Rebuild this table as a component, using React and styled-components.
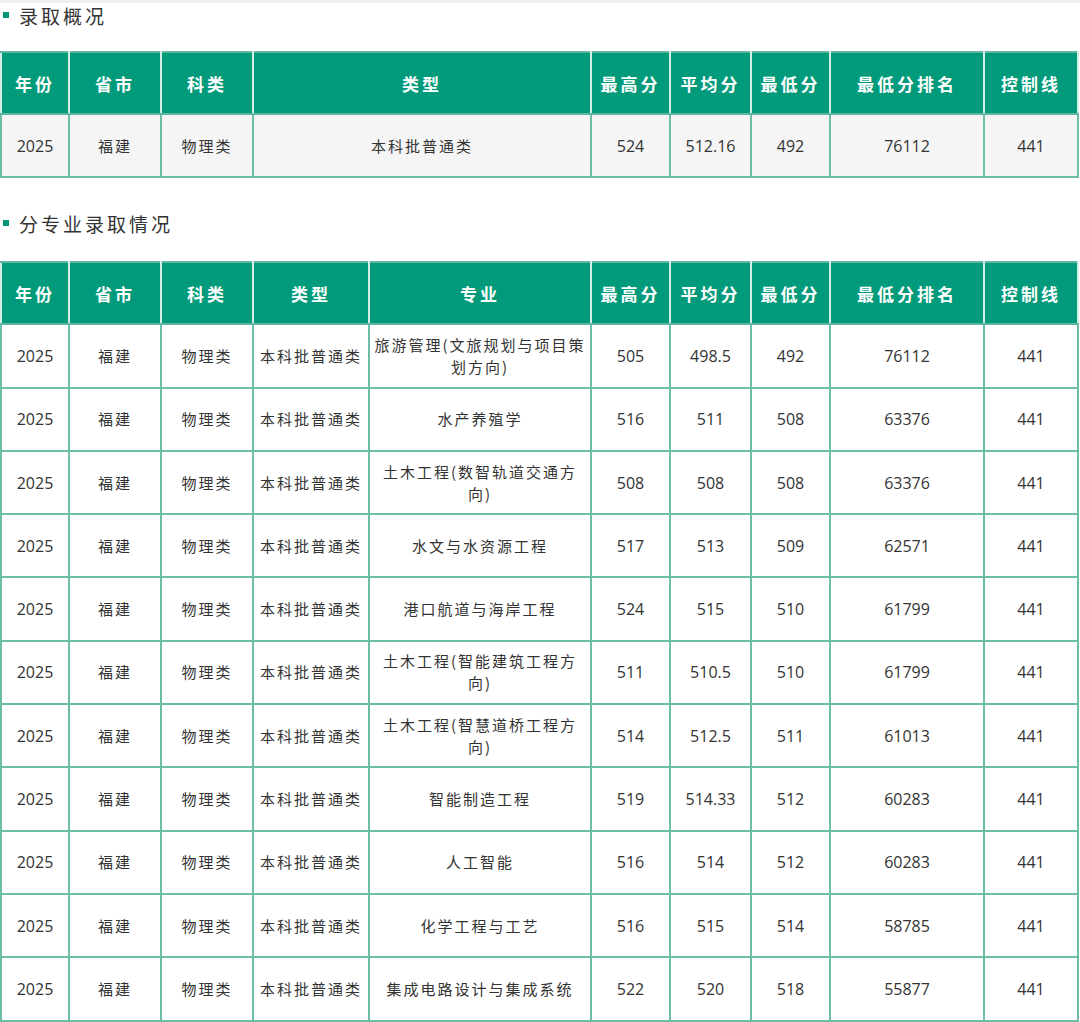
import React from 'react'
import styled, { createGlobalStyle } from 'styled-components'

const GlobalStyle = createGlobalStyle`
  body {
    margin: 0;
    background: #fff;
    font-family: "Noto Sans CJK SC", "Noto Sans", sans-serif;
    color: #333;
  }
`

const Page = styled.div`
  width: 1080px;
  border-top: 3px solid #f1f1f1;
`

const Title = styled.div`
  display: flex;
  align-items: center;
  gap: 10px;
  height: ${p => p.h}px;
  padding-left: 3px;
  font-size: 19px;
  letter-spacing: 3px;
  color: #333;
  margin-top: ${p => p.top || 0}px;
  margin-bottom: ${p => p.bottom}px;
`

const Square = styled.span`
  width: 6px;
  height: 6px;
  background: #05957a;
`

const Table = styled.table`
  width: 1077px;
  border-collapse: collapse;
  table-layout: fixed;
`

const Head = styled.th`
  height: 60px;
  padding: 0;
  background: #019b7b;
  color: #fff;
  font-weight: 700;
  font-size: 17px;
  letter-spacing: 3px;
  border: 2px solid #5fb7a0;
  border-color: #5fb7a0 #d7ece6;
`

const Cell = styled.td`
  height: 61.3px;
  padding: 0 2px;
  text-align: center;
  font-size: ${p => (p.num ? 16 : 15)}px;
  letter-spacing: ${p => (p.num ? 0 : 2)}px;
  line-height: 22px;
  color: #333;
  background: ${p => (p.gray ? '#f5f5f5' : '#fff')};
  border: 2px solid #6dbda7;
  font-family: ${p => (p.num ? '"Open Sans", "Noto Sans", sans-serif' : 'inherit')};
`

const overviewCols = [68, 92, 92, 338, 79, 81, 79, 154, 94]
const majorCols = [68, 92, 92, 116, 222, 79, 81, 79, 154, 94]

const majors = [
  ['旅游管理(文旅规划与项目策划方向)', '505', '498.5', '492', '76112'],
  ['水产养殖学', '516', '511', '508', '63376'],
  ['土木工程(数智轨道交通方向)', '508', '508', '508', '63376'],
  ['水文与水资源工程', '517', '513', '509', '62571'],
  ['港口航道与海岸工程', '524', '515', '510', '61799'],
  ['土木工程(智能建筑工程方向)', '511', '510.5', '510', '61799'],
  ['土木工程(智慧道桥工程方向)', '514', '512.5', '511', '61013'],
  ['智能制造工程', '519', '514.33', '512', '60283'],
  ['人工智能', '516', '514', '512', '60283'],
  ['化学工程与工艺', '516', '515', '514', '58785'],
  ['集成电路设计与集成系统', '522', '520', '518', '55877'],
]

function Cols({ widths }) {
  return (
    <colgroup>
      {widths.map((w, i) => (
        <col key={i} style={{ width: w }} />
      ))}
    </colgroup>
  )
}

export default function App() {
  return (
    <Page>
      <GlobalStyle />
      <Title h={24} bottom={24}>
        <Square />
        录取概况
      </Title>
      <Table>
        <Cols widths={overviewCols} />
        <thead>
          <tr>
            {['年份', '省市', '科类', '类型', '最高分', '平均分', '最低分', '最低分排名', '控制线'].map(h => (
              <Head key={h}>{h}</Head>
            ))}
          </tr>
        </thead>
        <tbody>
          <tr>
            <Cell gray num>2025</Cell>
            <Cell gray>福建</Cell>
            <Cell gray>物理类</Cell>
            <Cell gray>本科批普通类</Cell>
            <Cell gray num>524</Cell>
            <Cell gray num>512.16</Cell>
            <Cell gray num>492</Cell>
            <Cell gray num>76112</Cell>
            <Cell gray num>441</Cell>
          </tr>
        </tbody>
      </Table>
      <Title h={28} top={31} bottom={24}>
        <Square />
        分专业录取情况
      </Title>
      <Table>
        <Cols widths={majorCols} />
        <thead>
          <tr>
            {['年份', '省市', '科类', '类型', '专业', '最高分', '平均分', '最低分', '最低分排名', '控制线'].map(h => (
              <Head key={h}>{h}</Head>
            ))}
          </tr>
        </thead>
        <tbody>
          {majors.map(([name, hi, avg, lo, rank]) => (
            <tr key={name}>
              <Cell num>2025</Cell>
              <Cell>福建</Cell>
              <Cell>物理类</Cell>
              <Cell>本科批普通类</Cell>
              <Cell>{name}</Cell>
              <Cell num>{hi}</Cell>
              <Cell num>{avg}</Cell>
              <Cell num>{lo}</Cell>
              <Cell num>{rank}</Cell>
              <Cell num>441</Cell>
            </tr>
          ))}
        </tbody>
      </Table>
    </Page>
  )
}
